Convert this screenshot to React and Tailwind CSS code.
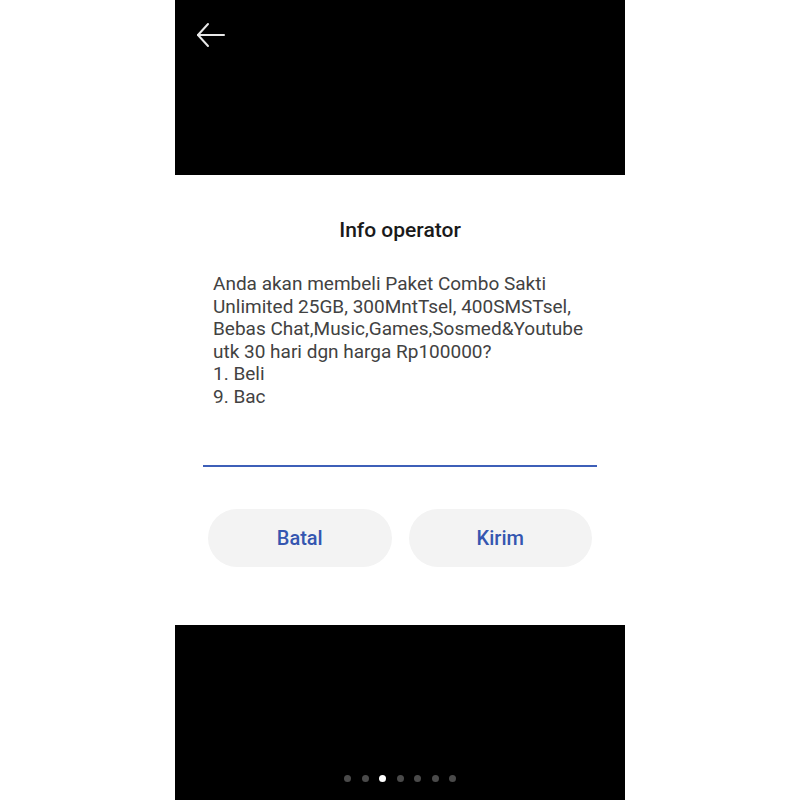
export default function App() {
  const dots = [0, 1, 2, 3, 4, 5, 6];
  return (
    <div className="w-[800px] h-[800px] bg-white flex justify-center" style={{ fontFamily: "Roboto, 'Noto Sans', sans-serif" }}>
      <div className="w-[450px] h-[800px] flex flex-col">
        <div className="h-[175px] bg-black pt-[22px] pl-[21px]">
          <svg width="30" height="26" viewBox="0 0 30 26" fill="none" stroke="#e8e8e8" strokeWidth="2" strokeLinecap="round" strokeLinejoin="round">
            <path d="M28 13H2" />
            <path d="M12 2L2 13l10 11" />
          </svg>
        </div>
        <div className="h-[450px] bg-white flex flex-col">
          <div className="pt-[42px] text-center text-[21px] font-medium text-[#1a1a1a] leading-[26px]">Info operator</div>
          <div className="pt-[30px] px-[38px] text-[19px] leading-[22.5px] text-[#424242]">
            <div>Anda akan membeli Paket Combo Sakti</div>
            <div>Unlimited 25GB, 300MntTsel, 400SMSTsel,</div>
            <div>Bebas Chat,Music,Games,Sosmed&amp;Youtube</div>
            <div>utk 30 hari dgn harga Rp100000?</div>
            <div>1. Beli</div>
            <div>9. Bac</div>
          </div>
          <div className="mt-[57px] mx-[28px] h-[2px] bg-[#3d5fb8]" />
          <div className="mt-[42px] px-[33px] flex gap-[17px]">
            <div className="flex-1 h-[58px] rounded-full bg-[#f3f3f3] flex items-center justify-center text-[20px] font-medium text-[#3556b0]">Batal</div>
            <div className="flex-1 h-[58px] rounded-full bg-[#f3f3f3] flex items-center justify-center text-[20px] font-medium text-[#3556b0]">Kirim</div>
          </div>
        </div>
        <div className="h-[175px] bg-black flex items-end justify-center pb-[18px]">
          <div className="flex gap-[10.5px]">
            {dots.map((i) => (
              <div key={i} className={i === 2 ? "w-[7px] h-[7px] rounded-full bg-white" : "w-[7px] h-[7px] rounded-full bg-[#4a4a4a]"} />
            ))}
          </div>
        </div>
      </div>
    </div>
  );
}
